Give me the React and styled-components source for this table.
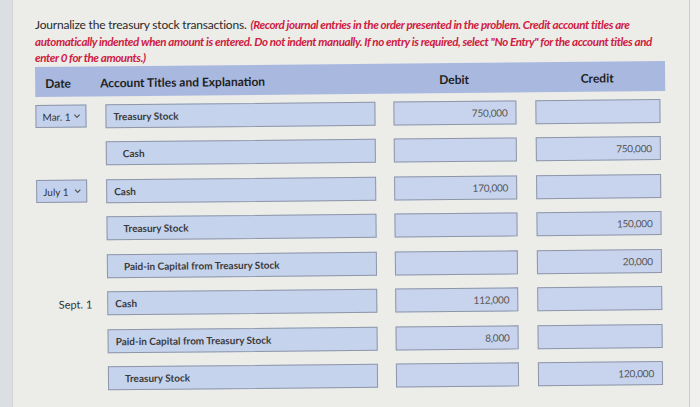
import React from 'react';
import styled, { createGlobalStyle } from 'styled-components';

const GlobalStyle = createGlobalStyle`
  html, body {
    margin: 0;
    padding: 0;
    background: #ebebe8;
  }
  body {
    font-family: Lato, "Open Sans", "Liberation Sans", sans-serif;
  }
`;

const Screen = styled.div`
  width: 700px;
  height: 407px;
  overflow: hidden;
  display: flex;
  background: #ebebe8;
`;

const LeftEdge = styled.div`
  width: 12px;
  flex-shrink: 0;
  background: #dcdfe2;
  border-right: 1px solid #d3d5d6;
`;

const Sheet = styled.div`
  width: 677px;
  flex-shrink: 0;
  padding: 15px 0 0 22px;
  box-sizing: border-box;
  background: #ecece9;
  border-right: 1px solid #cdcdcb;
`;

const RightEdge = styled.div`
  flex: 1;
  background: #f0f0ef;
`;

// the question text wraps at fixed points in the original, so each line is its own block
const Instructions = styled.div`
  display: flex;
  flex-direction: column;
  width: 640px;
`;

const Line = styled.div`
  height: 16.5px;
  line-height: 16.5px;
  white-space: nowrap;
`;

const Lead = styled.span`
  font-size: 12px;
  color: #2a2a2a;
  letter-spacing: -0.2px;
  margin-right: 4px;
`;

const Note = styled.span`
  color: #cf2040;
  font-size: 11.6px;
  font-weight: 700;
  font-style: italic;
  letter-spacing: -0.4px;
`;

// the photo of the screen is slightly tilted: the table rises toward the right
const Table = styled.div`
  margin-top: 2px;
  width: 630px;
  transform: rotate(-0.55deg);
  transform-origin: 0 0;
`;

const columns = '70px 288px 142px 130px';

const HeaderBar = styled.div`
  display: grid;
  grid-template-columns: ${columns};
  align-items: center;
  height: 30px;
  padding-top: 3px;
  box-sizing: border-box;
  background: #a9b8df;
  font-size: 12px;
  font-weight: 700;
  color: #1e1e1e;
`;

const HeadCell = styled.div`
  padding-left: ${p => p.$pad || 0}px;
  margin-left: ${p => p.$shift || 0}px;
  text-align: ${p => p.$center ? 'center' : 'left'};
  padding-right: ${p => p.$right || 0}px;
`;

const Body = styled.div`
  padding-top: 1px;
`;

const Row = styled.div`
  display: grid;
  grid-template-columns: ${columns};
  align-items: center;
  height: 37.5px;
`;

const DateSelect = styled.div`
  width: 51px;
  height: 23px;
  box-sizing: border-box;
  display: flex;
  align-items: center;
  justify-content: space-between;
  padding: 0 5px 0 6px;
  background: #c4d1ec;
  border: 1px solid #8e96a6;
  font-size: 10px;
  color: #333;
`;

const Chevron = styled.svg`
  width: 7px;
  height: 5px;
`;

const DateText = styled.div`
  text-align: right;
  padding-right: 15px;
  font-size: 11px;
  color: #333;
`;

const AccountBox = styled.div`
  width: 270px;
  height: 24px;
  box-sizing: border-box;
  display: flex;
  align-items: center;
  padding-left: ${p => (p.$indent ? 16 : 7)}px;
  background: #c6d3ed;
  border: 1px solid #8f97a7;
  font-size: 10px;
  font-weight: 700;
  color: #3a3a3a;
`;

const AmountBox = styled.div`
  width: ${p => p.$w}px;
  height: 24px;
  box-sizing: border-box;
  display: flex;
  align-items: center;
  justify-content: flex-end;
  padding-right: 8px;
  background: #c8d4ee;
  border: 1px solid #8f97a7;
  font-size: 10px;
  color: #555;
  letter-spacing: -0.2px;
`;

const entries = [
  { date: 'Mar. 1', select: true, account: 'Treasury Stock', debit: '750,000' },
  { account: 'Cash', indent: true, credit: '750,000' },
  { date: 'July 1', select: true, account: 'Cash', debit: '170,000' },
  { account: 'Treasury Stock', indent: true, credit: '150,000' },
  { account: 'Paid-in Capital from Treasury Stock', indent: true, credit: '20,000' },
  { date: 'Sept. 1', account: 'Cash', debit: '112,000' },
  { account: 'Paid-in Capital from Treasury Stock', debit: '8,000' },
  { account: 'Treasury Stock', indent: true, credit: '120,000' },
];

function DateCell({ entry }) {
  if (!entry.date) return <div />;
  if (!entry.select) return <DateText>{entry.date}</DateText>;
  return (
    <DateSelect>
      <span>{entry.date}</span>
      <Chevron viewBox="0 0 7 5">
        <path d="M0.8 1 L3.5 3.8 L6.2 1" fill="none" stroke="#555" strokeWidth="1.2" />
      </Chevron>
    </DateSelect>
  );
}

export default function App() {
  return (
    <>
      <GlobalStyle />
      <Screen>
        <LeftEdge />
        <Sheet>
          <Instructions>
            <Line>
              <Lead>Journalize the treasury stock transactions.</Lead>
              <Note>(Record journal entries in the order presented in the problem. Credit account titles are</Note>
            </Line>
            <Line>
              <Note>automatically indented when amount is entered. Do not indent manually. If no entry is required, select "No Entry" for the account titles and</Note>
            </Line>
            <Line>
              <Note>enter 0 for the amounts.)</Note>
            </Line>
          </Instructions>

          <Table>
            <HeaderBar>
              <HeadCell $pad={10}>Date</HeadCell>
              <HeadCell $shift={-5}>Account Titles and Explanation</HeadCell>
              <HeadCell $center $right={20}>Debit</HeadCell>
              <HeadCell $center $right={6}>Credit</HeadCell>
            </HeaderBar>
            <Body>
              {entries.map((e, i) => (
                <Row key={i}>
                  <DateCell entry={e} />
                  <AccountBox $indent={e.indent}>{e.account}</AccountBox>
                  <AmountBox $w={123}>{e.debit}</AmountBox>
                  <AmountBox $w={125}>{e.credit}</AmountBox>
                </Row>
              ))}
            </Body>
          </Table>
        </Sheet>
        <RightEdge />
      </Screen>
    </>
  );
}
